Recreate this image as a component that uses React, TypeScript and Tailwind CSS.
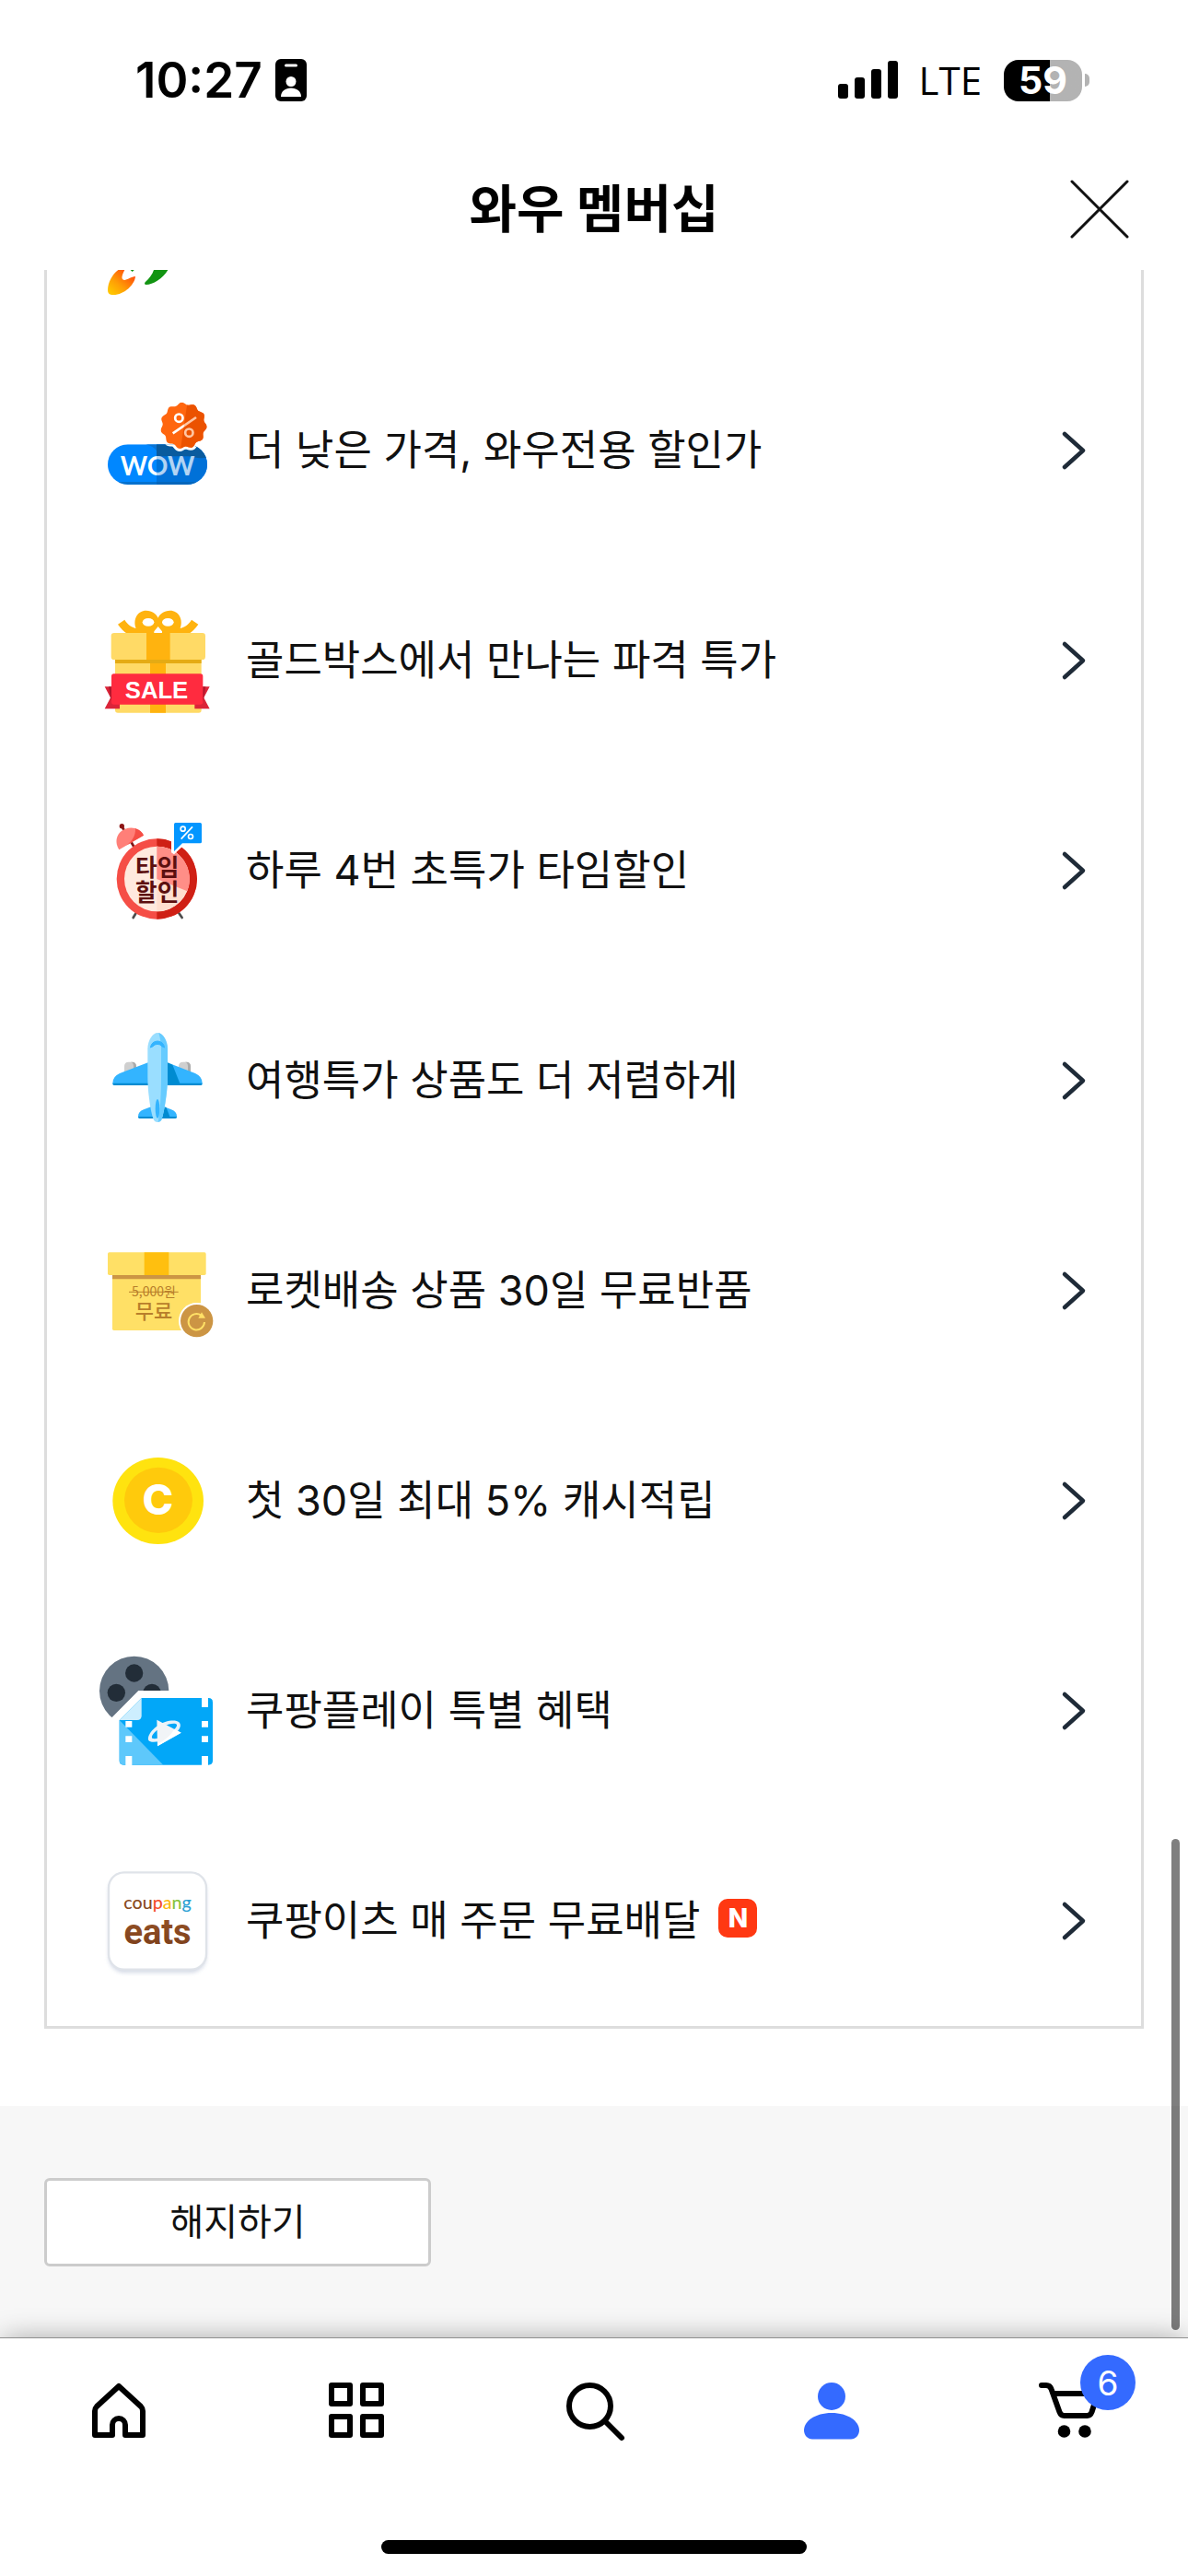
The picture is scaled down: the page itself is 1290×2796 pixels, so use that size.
import type { ReactNode } from "react"
import clsx from "clsx"

const latin = "font-['Inter',sans-serif]"
const korean = "font-['Inter','Noto_Sans_CJK_KR',sans-serif]"

function scallop(cx: number, cy: number, r: number, depth: number, waves: number) {
  const points: string[] = []
  for (let deg = 0; deg < 360; deg += 3) {
    const t = (deg * Math.PI) / 180
    const rr = r + depth * Math.cos(waves * t - 0.6)
    points.push(`${(cx + rr * Math.cos(t)).toFixed(1)} ${(cy + rr * Math.sin(t)).toFixed(1)}`)
  }
  return `M${points.join("L")}Z`
}

const badgePath = scallop(328, 126, 72, 4, 11)

function Art({ viewBox, children }: { viewBox: string; children: ReactNode }) {
  return (
    <svg viewBox={viewBox} className="w-[132px] h-[132px] shrink-0" aria-hidden="true">
      {children}
    </svg>
  )
}

function WowArt() {
  return (
    <Art viewBox="45 9 396 396">
      <defs>
        <clipPath id="wow-pill">
          <rect x="81" y="187" width="324" height="131" rx="65.5" />
        </clipPath>
        <clipPath id="wow-badge">
          <path d={badgePath} />
        </clipPath>
        <linearGradient id="wow-text" gradientUnits="userSpaceOnUse" x1="239" x2="241" y1="0" y2="0">
          <stop offset="0" stopColor="#fff" />
          <stop offset="1" stopColor="#b3d4f3" />
        </linearGradient>
        <linearGradient id="wow-slash" gradientUnits="userSpaceOnUse" x1="327" x2="331" y1="0" y2="0">
          <stop offset="0" stopColor="#fff" />
          <stop offset="1" stopColor="#ffc6a3" />
        </linearGradient>
      </defs>
      <g clipPath="url(#wow-pill)">
        <path d="M81 187h324v131H81z" fill="#0087ff" />
        <path d="M240 187h165v131H240z" fill="#0071d8" />
        <path d="M205 187C222 191 234 198 240 208V187Z" fill="#0a74d4" />
        <path d="M240 187H405V230C385 233 362 231 345 226L240 226Z" fill="#0a5b9e" />
        <path d="M81 309h324v9H81z" fill="#0a5b9e" opacity="0.5" />
        <path d={badgePath} fill="#fff" stroke="#fff" strokeWidth="18" />
      </g>
      <text x="243" y="288" textAnchor="middle" fontSize="84" fill="url(#wow-text)" className="font-['Lato',sans-serif] font-bold">
        WOW
      </text>
      <g clipPath="url(#wow-badge)">
        <path d="M240 40h180v170H240z" fill="#ff660f" />
        <path d="M342 40h80v170H317Z" fill="#eb5200" />
      </g>
      <circle cx="313" cy="101" r="12.500" fill="none" stroke="#fff" strokeWidth="8" />
      <circle cx="346" cy="149" r="12.500" fill="none" stroke="#ffc6a3" strokeWidth="8" />
      <path d="M293 151L369 99" stroke="url(#wow-slash)" strokeWidth="8" />
    </Art>
  )
}

function GiftArt() {
  return (
    <Art viewBox="45 693 396 396">
      <path d="M114 773L136 758C146 774 158 782 173 786C162 757 178 728 206 728C226 728 240 740 245 752C250 740 264 728 284 728C312 728 328 757 317 786C332 782 344 774 354 758L376 773C366 788 356 796 346 803H258V796L245 780L232 796V803H144C134 796 124 788 114 773Z" fill="#ffb30f" />
      <path d="M245 782L258 802H232Z" fill="#fff" />
      <ellipse cx="213" cy="766" rx="19" ry="13" fill="#fff" />
      <ellipse cx="277" cy="766" rx="19" ry="13" fill="#fff" />
      <rect x="105" y="870" width="281" height="191" rx="9" fill="#ffda66" />
      <path d="M219 885h51v176h-51z" fill="#ffb30f" />
      <path d="M105 886h281v14H105z" fill="#e5ab14" />
      <rect x="92" y="801" width="307" height="87" rx="10" fill="#ffda66" />
      <path d="M207 801h77v87h-77z" fill="#ffb30f" />
      <path d="M71 976H120V1048H71L90 1012ZM413 976H364V1048H413L394 1012Z" fill="#db2439" />
      <path d="M84 976H94V1026L90 1012ZM400 976H390V1026L394 1012Z" fill="#b0172c" />
      <rect x="93" y="934" width="298" height="100" rx="8" fill="#ff2b3f" />
      <text x="240" y="1013" textAnchor="middle" fontSize="77" fill="#fff" className="font-['Liberation_Sans',sans-serif] font-bold">
        SALE
      </text>
    </Art>
  )
}

function ClockArt() {
  return (
    <Art viewBox="45 27 396 396">
      <path d="M176 358L164 378M309 358L323 378" stroke="#4d4d4d" strokeWidth="8" strokeLinecap="round" />
      <path d="M127 81L168 150" stroke="#801515" strokeWidth="8" />
      <circle cx="127" cy="80" r="8" fill="#8c1414" />
      <path d="M118 157C100 128 112 99 138 89C162 80 187 88 198 110Z" fill="#ff7f78" />
      <path d="M141 143C160 130 172 112 171 88C184 92 193 99 198 110Z" fill="#f54e46" />
      <circle cx="241" cy="252" r="131" fill="#f54e46" />
      <path d="M241 121A131 131 0 0 1 241 383Z" fill="#cf2015" />
      <circle cx="241" cy="252" r="106" fill="#ffe9de" />
      <path d="M241 146A106 106 0 0 1 241 358Z" fill="#ffdfcf" />
      <path d="M241 252V146A106 106 0 0 1 340 292Z" fill="#ff8e87" />
      <path d="M288 69H394V145H326L297 172L288 166Z" fill="#fff" />
      <path d="M302 69H382Q387 69 387 74V131Q387 136 382 136H324L297 162V74Q297 69 302 69Z" fill="#0396ff" />
      <circle cx="326" cy="89" r="7.500" fill="none" stroke="#fff" strokeWidth="5" />
      <circle cx="351" cy="114" r="7.500" fill="none" stroke="#fff" strokeWidth="5" />
      <path d="M357 82L320 122" stroke="#fff" strokeWidth="5" />
      <text x="242" y="242" textAnchor="middle" fontSize="77" fill="#5c0f0f" className="font-['Liberation_Sans','Noto_Sans_CJK_KR',sans-serif] font-bold">
        타임
      </text>
      <text x="242" y="325" textAnchor="middle" fontSize="77" fill="#5c0f0f" className="font-['Liberation_Sans','Noto_Sans_CJK_KR',sans-serif] font-bold">
        할인
      </text>
    </Art>
  )
}

function PlaneArt() {
  return (
    <Art viewBox="45 711 396 396">
      <path d="M135 885V862Q135 848 149 848H160Q174 848 174 862V885Z" fill="#cfcfcf" />
      <path d="M156 848H160Q174 848 174 862V885H165V862Q165 850 156 848Z" fill="#ababab" />
      <path d="M312 885V862Q312 848 326 848H337Q351 848 351 862V885Z" fill="#cfcfcf" />
      <path d="M333 848H337Q351 848 351 862V885H342V862Q342 850 333 848Z" fill="#ababab" />
      <path d="M212 850L120 885Q97 895 97 917Q97 924 103 924H383Q389 924 389 917Q389 895 366 885L275 850Z" fill="#33b4ff" />
      <path d="M275 850L292 857L317 920H275Z" fill="#008bd1" />
      <path d="M97 917H389Q389 924 383 924H103Q97 924 97 917Z" fill="#008bd1" />
      <path d="M222 994L198 1003Q180 1010 180 1025Q180 1032 186 1032H300Q306 1032 306 1025Q306 1010 288 1003L265 994Z" fill="#33b4ff" />
      <path d="M265 994L272 997L284 1028H258Z" fill="#008bd1" />
      <path d="M180 1026H306Q306 1032 300 1032H186Q180 1032 180 1026Z" fill="#008bd1" />
      <path d="M211 805C211 777 228 753 243 753C259 753 276 777 276 805V895C276 950 264 1012 257 1035Q253 1044 243 1044Q234 1044 230 1035C221 1012 211 950 211 895Z" fill="#9adeff" />
      <path d="M247 753C262 757 276 779 276 805V895C276 950 264 1012 257 1035Q253 1044 245 1044C252 1010 255 950 255 895V805C255 783 251 768 247 753Z" fill="#66cbff" />
      <path d="M220 801Q224 781 243 780Q262 781 266 801L259 798Q252 790 243 790Q234 790 227 798Z" fill="#33b4ff" stroke="#33b4ff" strokeWidth="3" />
      <ellipse cx="243" cy="1000" rx="7" ry="31" fill="#33b4ff" />
    </Art>
  )
}

function BoxArt() {
  return (
    <Art viewBox="45 15 396 396">
      <path d="M96 160H384V337Q384 342 379 342H101Q96 342 96 337Z" fill="#ffe066" />
      <path d="M96 160H384V175H96z" fill="#cc9544" />
      <rect x="81" y="88" width="320" height="74" rx="5" fill="#ffe066" />
      <path d="M200 88h80v74h-80z" fill="#ffbf0f" />
      <text x="231" y="231" textAnchor="middle" fontSize="42" fill="#b87e2b" className="font-['Noto_Sans_CJK_KR',sans-serif]">
        5,000원
      </text>
      <path d="M150 217H311" stroke="#b87e2b" strokeWidth="3" />
      <text x="231" y="303" textAnchor="middle" fontSize="66" fill="#b87e2b" className={clsx(korean, "font-medium")}>
        무료
      </text>
      <circle cx="371" cy="311" r="59" fill="#fff" />
      <circle cx="371" cy="311" r="53" fill="#cc9544" />
      <path d="M385 293A26 26 0 1 0 396 315" fill="none" stroke="#ffe066" strokeWidth="6" />
      <path d="M387 283L399 302L376 302Z" fill="#ffe066" />
    </Art>
  )
}

function CoinArt() {
  return (
    <Art viewBox="45 699 396 396">
      <ellipse cx="245" cy="897" rx="148" ry="141" fill="#ffe30f" />
      <ellipse cx="246" cy="895" rx="111" ry="107" fill="#ffca0c" />
      <text x="244" y="942" textAnchor="middle" fontSize="136" fill="#fff" className={clsx(latin, "font-extrabold")}>
        C
      </text>
    </Art>
  )
}

function FilmArt() {
  return (
    <Art viewBox="45 63 396 396">
      <defs>
        <clipPath id="film-reel">
          <path d="M45 63H300V195H181L95 282L45 300Z" />
        </clipPath>
      </defs>
      <g clipPath="url(#film-reel)">
        <circle cx="167" cy="196" r="113" fill="#647382" />
        <circle cx="167" cy="138" r="29" fill="#222d38" />
        <circle cx="109" cy="202" r="29" fill="#222d38" />
        <circle cx="225" cy="202" r="29" fill="#222d38" />
      </g>
      <path d="M191 219H409Q423 219 423 233V423Q423 437 409 437H133Q119 437 119 423V291Z" fill="#02a7f8" />
      <path d="M119 291L262 437H133Q119 437 119 423Z" fill="#5ec8fb" />
      <path d="M191 219V277Q191 291 177 291H119Z" fill="#cdeefe" />
      <path d="M387 219h21v30h-21zM387 294h21v20h-21zM387 343h21v20h-21zM387 408h21v30h-21zM139 294h21v20h-21zM139 343h21v20h-21zM139 408h21v30h-21z" fill="#fff" />
      {/* ring tapers towards the top right, thicker at the lower left */}
      <path fillRule="evenodd" d="M214 357C207 340 234 309 268 297C300 287 322 295 317 313C311 334 280 354 250 360C232 364 217 363 214 357ZM225 349C229 355 250 350 268 341C291 330 308 315 306 306C303 299 281 302 261 312C240 322 222 340 225 349Z" fill="#e8f2f9" />
      <path d="M241 290L320 332L243 376Z" fill="#f1f4f7" />
      <path d="M320 332L243 376V368Q282 350 298 320Z" fill="#fff" />
    </Art>
  )
}

function EatsArt() {
  return (
    <Art viewBox="45 747 396 396">
      <defs>
        <linearGradient id="eats-brown" x1="0" x2="0" y1="0" y2="1">
          <stop offset="0" stopColor="#9a5628" />
          <stop offset="1" stopColor="#783c1a" />
        </linearGradient>
        <filter id="eats-shadow" x="-20%" y="-20%" width="140%" height="140%">
          <feGaussianBlur stdDeviation="7" />
        </filter>
      </defs>
      <rect x="84" y="796" width="318" height="318" rx="52" fill="#c9d0e0" opacity="0.8" filter="url(#eats-shadow)" />
      <rect x="84" y="787" width="318" height="316" rx="50" fill="#fff" stroke="#dfe3e9" strokeWidth="7" />
      <text x="243" y="907" textAnchor="middle" fontSize="59" className="font-['Lato',sans-serif] font-medium">
        <tspan fill="#8a4b22">cou</tspan>
        <tspan fill="#f4512f">p</tspan>
        <tspan fill="#fbb911">a</tspan>
        <tspan fill="#87c33c">n</tspan>
        <tspan fill="#2a9fd3">g</tspan>
      </text>
      <text x="243" y="1020" textAnchor="middle" fontSize="114" fill="url(#eats-brown)" className="font-['Roboto',sans-serif] font-bold">
        eats
      </text>
    </Art>
  )
}

const benefits = [
  { label: "더 낮은 가격, 와우전용 할인가", art: <WowArt /> },
  { label: "골드박스에서 만나는 파격 특가", art: <GiftArt /> },
  { label: "하루 4번 초특가 타임할인", art: <ClockArt /> },
  { label: "여행특가 상품도 더 저렴하게", art: <PlaneArt /> },
  { label: "로켓배송 상품 30일 무료반품", art: <BoxArt /> },
  { label: "첫 30일 최대 5% 캐시적립", art: <CoinArt /> },
  { label: "쿠팡플레이 특별 혜택", art: <FilmArt /> },
  { label: "쿠팡이츠 매 주문 무료배달", art: <EatsArt />, isNew: true },
]

function StatusBar() {
  return (
    <div className={clsx(latin, "h-[160px] pt-[14px] pl-[147px] pr-[107px] flex items-center justify-between text-black")}>
      <div className="flex items-center gap-[14px]">
        <span className="text-[53px] leading-none font-semibold">10:27</span>
        <svg viewBox="0 0 34 46" className="w-[34px] h-[46px]" aria-hidden="true">
          <rect width="34" height="46" rx="6" />
          <rect x="10" y="5.500" width="14" height="3" rx="1.500" fill="#fff" />
          <circle cx="17" cy="24.500" r="5.500" fill="#fff" />
          <path d="M6 41C6 35 11 31.500 17 31.500S28 35 28 41Z" fill="#fff" />
        </svg>
      </div>
      <div className="flex items-center">
        <svg viewBox="0 0 66 42" className="w-[66px] h-[42px]" aria-hidden="true">
          <rect x="0" y="25" width="11" height="16" rx="3" />
          <rect x="18" y="18" width="11" height="23" rx="3" />
          <rect x="36" y="9" width="11" height="32" rx="3" />
          <rect x="54" y="0" width="11" height="41" rx="3" />
        </svg>
        <span className="ml-[22px] text-[42px] leading-none font-['Open_Sans',sans-serif] font-medium">LTE</span>
        <div className="ml-6 w-[85px] h-[45px] rounded-2xl bg-linear-to-r from-black from-59% to-[#b3b3b3] to-59% flex items-center justify-center text-white text-[41px] leading-none font-bold">
          59
        </div>
        <div className="ml-[3px] w-[5px] h-[14px] rounded-r-full bg-[#b3b3b3]" />
      </div>
    </div>
  )
}

function Header() {
  return (
    <header className="h-[133px] px-[60px] grid grid-cols-[1fr_auto_1fr] items-center">
      <h1 className="col-start-2 text-[56px] leading-none font-bold text-black">와우 멤버십</h1>
      <button type="button" aria-label="닫기" className="justify-self-end">
        <svg viewBox="0 0 72 72" className="w-[72px] h-[72px]" aria-hidden="true">
          <path d="M6 6L66 66M66 6L6 66" stroke="#111" strokeWidth="3" strokeLinecap="round" />
        </svg>
      </button>
    </header>
  )
}

function BenefitList() {
  return (
    <section className="mx-12 mb-[84px] border-3 border-t-0 border-[#ddd]">
      <div className="h-[82px] pl-[54px]">
        <svg viewBox="135 759 396 102" className="w-[132px] h-[34px]" aria-hidden="true">
          <defs>
            <linearGradient id="fresh-carrot" gradientUnits="userSpaceOnUse" x1="245" y1="765" x2="185" y2="835">
              <stop offset="0" stopColor="#ff4a0a" />
              <stop offset="0.600" stopColor="#ff9d05" />
              <stop offset="1" stopColor="#ffc400" />
            </linearGradient>
          </defs>
          <path d="M205 759H226C220 772 214 783 220 790C228 797 246 781 261 780C260 806 222 844 184 840Q171 838 171 824C172 800 185 774 205 759Z" fill="url(#fresh-carrot)" />
          <path d="M321 759H367C350 788 318 807 296 807Q288 806 293 799C306 787 316 774 321 759Z" fill="#129412" />
          <path d="M245 759H257L251 765Z" fill="#129412" />
        </svg>
      </div>
      <ul>
        {benefits.map((item) => (
          <li key={item.label}>
            <a href="#" className="h-[228px] pl-[54px] pr-[58px] flex items-center gap-[30px]">
              {item.art}
              <span className="flex-1 flex items-center gap-5 text-[45px] leading-[60px] text-[#111]">
                {item.label}
                {item.isNew && (
                  <span className={clsx(latin, "mb-1.5 w-[42px] h-[42px] rounded-[10px] bg-[#ff3812] text-white text-[28px] font-extrabold flex items-center justify-center")}>
                    N
                  </span>
                )}
              </span>
              <svg viewBox="0 0 30 48" className="w-[30px] h-[48px]" aria-hidden="true">
                <path d="M5 6L25 24L5 42" fill="none" stroke="#1f2b38" strokeWidth="4.500" strokeLinecap="round" strokeLinejoin="round" />
              </svg>
            </a>
          </li>
        ))}
      </ul>
    </section>
  )
}

function TabIcon({ children }: { children: ReactNode }) {
  return (
    <svg viewBox="0 0 72 72" className="w-[72px] h-[72px]" fill="none" stroke="#000" strokeWidth="6" strokeLinecap="round" strokeLinejoin="round" aria-hidden="true">
      {children}
    </svg>
  )
}

function TabBar() {
  return (
    <nav className="relative border-t border-[#8f8f8f] bg-white pt-[42px] pb-6 shadow-[0_0_30px_-4px_rgba(0,0,0,0.4)]">
      <div className="grid grid-cols-5 justify-items-center">
        <a href="#" aria-label="홈">
          <TabIcon>
            <path d="M36 10L12 32Q10 34 10 37V63H29V52A7 7 0 0 1 43 52V63H62V37Q62 34 60 32Z" />
          </TabIcon>
        </a>
        <a href="#" aria-label="카테고리">
          <TabIcon>
            <rect x="9" y="9" width="20" height="20" />
            <rect x="43" y="9" width="20" height="20" />
            <rect x="9" y="43" width="20" height="20" />
            <rect x="43" y="43" width="20" height="20" />
          </TabIcon>
        </a>
        <a href="#" aria-label="검색">
          <TabIcon>
            <circle cx="31.500" cy="31.500" r="22.500" />
            <path d="M48 48L66 66" />
          </TabIcon>
        </a>
        <a href="#" aria-label="마이쿠팡">
          <TabIcon>
            <g fill="#346aff" stroke="none">
              <circle cx="36" cy="21" r="15" />
              <path d="M6 58C6 48 18 39 36 39S66 48 66 58C66 63 62 67.500 57 67.500H15C10 67.500 6 63 6 58Z" />
            </g>
          </TabIcon>
        </a>
        <a href="#" aria-label="장바구니" className="relative">
          <TabIcon>
            <path d="M6 9H11C14 9 15.500 10 16.500 13L25.500 38Q27 42 30.500 42H55.500Q59 42 60.500 38L67 18H19" />
            <circle cx="30.500" cy="59" r="6.800" fill="#000" stroke="none" />
            <circle cx="53" cy="59" r="6.800" fill="#000" stroke="none" />
          </TabIcon>
          <span className={clsx(latin, "absolute -top-6 left-12 w-[60px] h-[60px] rounded-full bg-[#346aff] text-white text-[37px] leading-none flex items-center justify-center")}>
            6
          </span>
        </a>
      </div>
      <div className="mt-[105px] mx-auto w-[462px] h-[15px] rounded-full bg-black" />
    </nav>
  )
}

export default function App() {
  return (
    <div className={clsx(korean, "min-h-screen bg-white flex flex-col")} lang="ko">
      <StatusBar />
      <Header />
      <main className="relative flex-1">
        <BenefitList />
        <div className="bg-[#f7f7f7] px-12 pt-[78px] pb-[77px]">
          <button type="button" className="block w-[420px] h-[96px] rounded-md border-3 border-[#ccc] bg-white text-[40px] text-[#111]">
            해지하기
          </button>
        </div>
        <div className="absolute right-[9px] bottom-2 w-[9px] h-[533px] rounded-full bg-black/50" />
      </main>
      <TabBar />
    </div>
  )
}
